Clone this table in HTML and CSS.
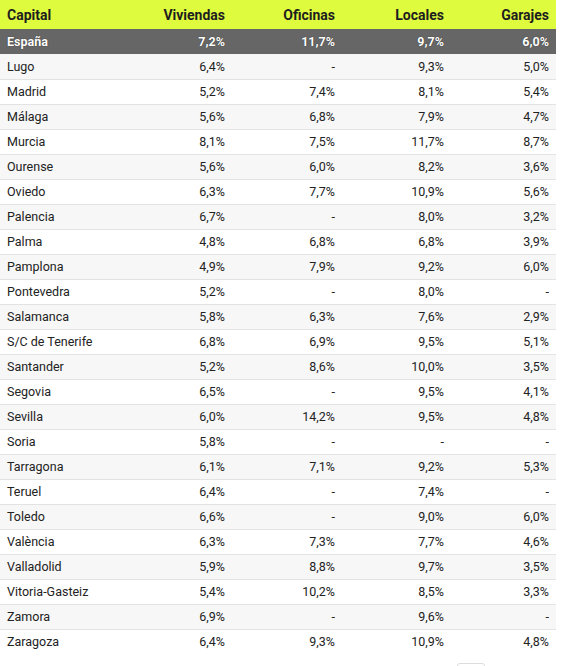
FILE: index.html
```html
<!DOCTYPE html>
<html lang="es">
<head>
<meta charset="utf-8">
<link rel="stylesheet" href="styles.css">
</head>
<body>
<div class="wrap">
<table class="tbl">
<colgroup>
<col class="c1"><col class="c2"><col class="c3"><col class="c4"><col class="c5">
</colgroup>
<thead>
<tr><th>Capital</th><th>Viviendas</th><th>Oficinas</th><th>Locales</th><th>Garajes</th></tr>
</thead>
<tbody>
<tr class="total"><td>España</td><td>7,2%</td><td>11,7%</td><td>9,7%</td><td>6,0%</td></tr>
<tr><td>Lugo</td><td>6,4%</td><td>-</td><td>9,3%</td><td>5,0%</td></tr>
<tr><td>Madrid</td><td>5,2%</td><td>7,4%</td><td>8,1%</td><td>5,4%</td></tr>
<tr><td>Málaga</td><td>5,6%</td><td>6,8%</td><td>7,9%</td><td>4,7%</td></tr>
<tr><td>Murcia</td><td>8,1%</td><td>7,5%</td><td>11,7%</td><td>8,7%</td></tr>
<tr><td>Ourense</td><td>5,6%</td><td>6,0%</td><td>8,2%</td><td>3,6%</td></tr>
<tr><td>Oviedo</td><td>6,3%</td><td>7,7%</td><td>10,9%</td><td>5,6%</td></tr>
<tr><td>Palencia</td><td>6,7%</td><td>-</td><td>8,0%</td><td>3,2%</td></tr>
<tr><td>Palma</td><td>4,8%</td><td>6,8%</td><td>6,8%</td><td>3,9%</td></tr>
<tr><td>Pamplona</td><td>4,9%</td><td>7,9%</td><td>9,2%</td><td>6,0%</td></tr>
<tr><td>Pontevedra</td><td>5,2%</td><td>-</td><td>8,0%</td><td>-</td></tr>
<tr><td>Salamanca</td><td>5,8%</td><td>6,3%</td><td>7,6%</td><td>2,9%</td></tr>
<tr><td>S/C de Tenerife</td><td>6,8%</td><td>6,9%</td><td>9,5%</td><td>5,1%</td></tr>
<tr><td>Santander</td><td>5,2%</td><td>8,6%</td><td>10,0%</td><td>3,5%</td></tr>
<tr><td>Segovia</td><td>6,5%</td><td>-</td><td>9,5%</td><td>4,1%</td></tr>
<tr><td>Sevilla</td><td>6,0%</td><td>14,2%</td><td>9,5%</td><td>4,8%</td></tr>
<tr><td>Soria</td><td>5,8%</td><td>-</td><td>-</td><td>-</td></tr>
<tr><td>Tarragona</td><td>6,1%</td><td>7,1%</td><td>9,2%</td><td>5,3%</td></tr>
<tr><td>Teruel</td><td>6,4%</td><td>-</td><td>7,4%</td><td>-</td></tr>
<tr><td>Toledo</td><td>6,6%</td><td>-</td><td>9,0%</td><td>6,0%</td></tr>
<tr><td>València</td><td>6,3%</td><td>7,3%</td><td>7,7%</td><td>4,6%</td></tr>
<tr><td>Valladolid</td><td>5,9%</td><td>8,8%</td><td>9,7%</td><td>3,5%</td></tr>
<tr><td>Vitoria-Gasteiz</td><td>5,4%</td><td>10,2%</td><td>8,5%</td><td>3,3%</td></tr>
<tr><td>Zamora</td><td>6,9%</td><td>-</td><td>9,6%</td><td>-</td></tr>
<tr class="last"><td>Zaragoza</td><td>6,4%</td><td>9,3%</td><td>10,9%</td><td>4,8%</td></tr>
</tbody>
</table>
<div class="pager"><span class="pbtn"></span></div>
</div>
</body>
</html>
```
FILE: styles.css
```css
html, body {
  margin: 0;
  padding: 0;
  background: #ffffff;
}
body {
  font-family: Roboto, "Liberation Sans", sans-serif;
  color: #222222;
}
.wrap {
  width: 556px;
}
.tbl {
  width: 556px;
  border-collapse: collapse;
  table-layout: fixed;
  font-size: 12.5px;
}
.c1 { width: 122px; }
.c2 { width: 110px; }
.c3 { width: 110px; }
.c4 { width: 109px; }
.c5 { width: 105px; }
.tbl th {
  background: #dffb3e;
  color: #1e1e1e;
  font-weight: 700;
  font-size: 14px;
  height: 29px;
  padding: 0 7px;
  text-align: right;
  box-sizing: border-box;
}
.tbl th:first-child,
.tbl td:first-child {
  text-align: left;
}
.tbl td {
  height: 25px;
  padding: 0 7px;
  text-align: right;
  box-sizing: border-box;
  border-bottom: 1px solid #e3e3e3;
}
.tbl tbody tr:nth-child(even) td {
  background: #f7f7f7;
}
.tbl tr.last td {
  border-bottom-color: transparent;
}
.tbl tr.total td {
  background: #666666;
  color: #ffffff;
  font-weight: 700;
  border-bottom: none;
  text-shadow: 0 0 1px #222;
}
.pager {
  display: flex;
  justify-content: flex-start;
  padding: 8px 0 0 457px;
}
.pbtn {
  display: block;
  width: 26px;
  height: 24px;
  border: 1px solid #dcdcdc;
  border-radius: 3px;
  background: #fff;
}
```
